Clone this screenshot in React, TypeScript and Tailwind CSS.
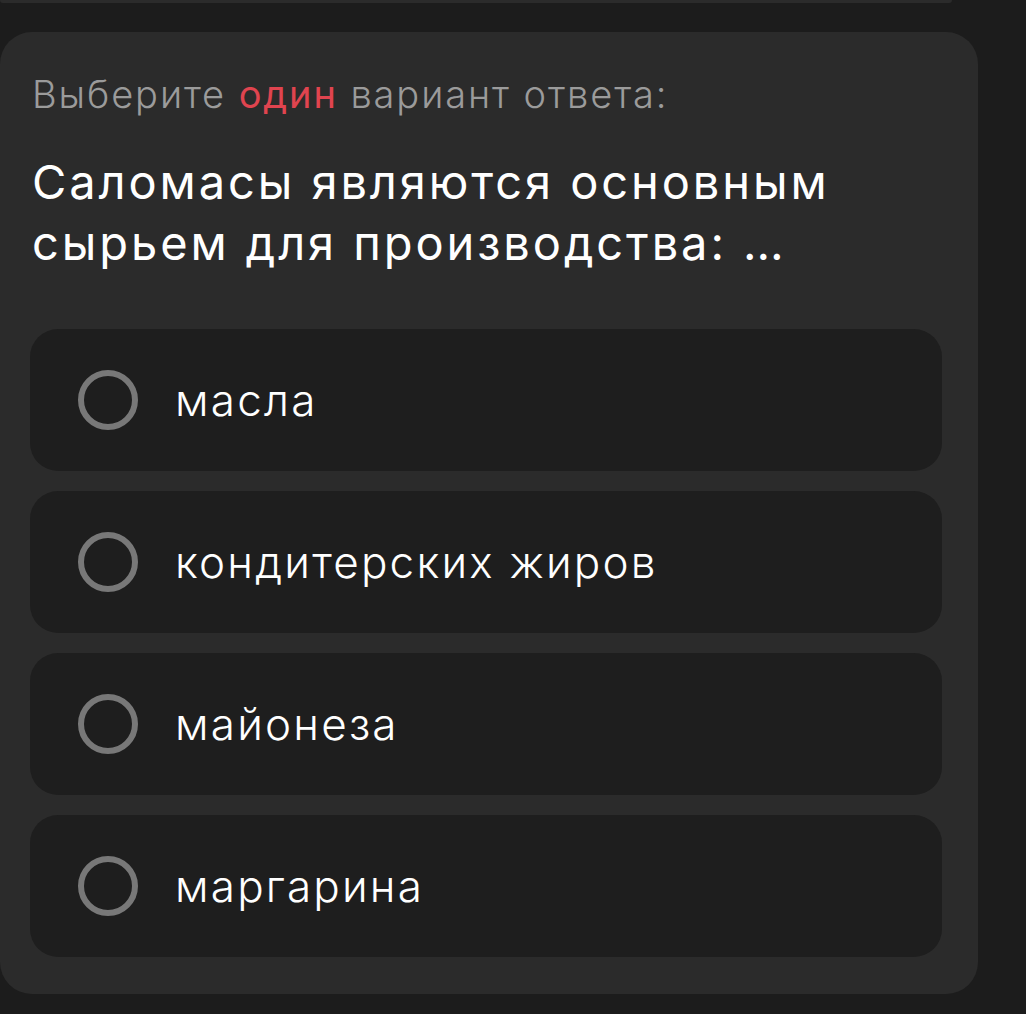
const options = ["масла", "кондитерских жиров", "майонеза", "маргарина"];

function Radio() {
  return <div className="w-[60px] h-[60px] shrink-0 rounded-full border-[6px] border-[#787878]" />;
}

export default function App() {
  return (
    <div
      className="w-full h-[1014px] bg-[#1c1c1c] overflow-hidden flex flex-col"
      style={{ fontFamily: "Inter, 'Noto Sans', sans-serif" }}
    >
      {/* previous card edge */}
      <div className="w-[952px] h-[3px] bg-[#2b2b2b] rounded-b-[3px]" />

      <div className="mt-[29px] w-[978px] bg-[#2b2b2b] rounded-[32px] pt-[40px] pb-[37px]">
        <p className="px-[32px] text-[38px] leading-[44px] font-light tracking-[0.05em] text-[#9b9b9b]">
          Выберите <span className="text-[#e0444f] font-normal">один</span> вариант ответа:
        </p>

        <h2 className="mt-[35px] px-[32px] text-[47px] leading-[61px] font-normal tracking-[0.062em] text-white">
          Саломасы являются основным сырьем для производства: …
        </h2>

        <div className="mt-[56px] ml-[30px] mr-[36px] flex flex-col gap-[20px]">
          {options.map((o) => (
            <div
              key={o}
              className="h-[142px] bg-[#1e1e1e] rounded-[28px] flex items-center pl-[48px] gap-[37px]"
            >
              <Radio />
              <span className="text-[44px] text-white font-light tracking-[0.05em]">{o}</span>
            </div>
          ))}
        </div>
      </div>
    </div>
  );
}
